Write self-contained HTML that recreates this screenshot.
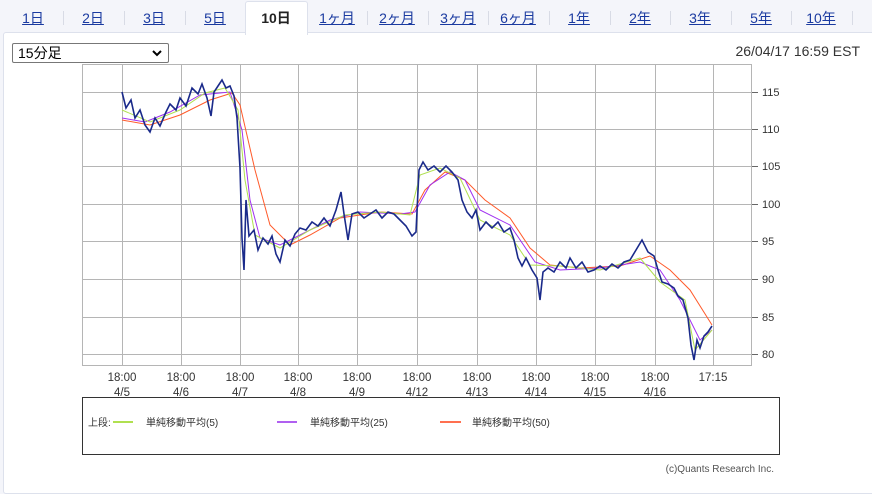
<!DOCTYPE html><html><head><meta charset="utf-8"><style>
body{margin:0;width:872px;height:484px;background:#f4f5fa;font-family:"Liberation Sans","Noto Sans CJK JP",sans-serif;overflow:hidden;position:relative}
.tab{position:absolute;top:8px;width:60px;text-align:center;font-size:14px;color:#1a3aa0;text-decoration:underline}
.sep{position:absolute;top:11px;width:1px;height:14px;background:#d8dbe5}
.panel{position:absolute;left:3px;top:32px;width:880px;height:460px;background:#fff;border:1px solid #dde1ec;border-radius:3px}
.act{position:absolute;left:245px;top:1px;width:61px;height:33px;background:#fff;border:1px solid #dde1ec;border-bottom:none;border-radius:3px 3px 0 0}
</style></head><body>
<div class="panel"></div>
<div class="act"></div>
<div class="tab" style="left:3px">1日</div><div class="tab" style="left:63px">2日</div><div class="tab" style="left:124px">3日</div><div class="tab" style="left:185px">5日</div>
<div class="tab" style="left:246px;text-decoration:none;font-weight:bold;color:#222">10日</div>
<div class="tab" style="left:307px">1ヶ月</div><div class="tab" style="left:367px">2ヶ月</div><div class="tab" style="left:428px">3ヶ月</div><div class="tab" style="left:488px">6ヶ月</div><div class="tab" style="left:549px">1年</div><div class="tab" style="left:610px">2年</div><div class="tab" style="left:670px">3年</div><div class="tab" style="left:731px">5年</div><div class="tab" style="left:791px">10年</div>
<div class="sep" style="left:63px"></div><div class="sep" style="left:124px"></div><div class="sep" style="left:185px"></div><div class="sep" style="left:367px"></div><div class="sep" style="left:428px"></div><div class="sep" style="left:488px"></div><div class="sep" style="left:549px"></div><div class="sep" style="left:610px"></div><div class="sep" style="left:670px"></div><div class="sep" style="left:731px"></div><div class="sep" style="left:791px"></div><div class="sep" style="left:852px"></div>
<div style="position:absolute;left:12px;top:43px;width:157px;height:20px;border:1px solid #777;border-radius:2px;background:#fff;font-size:14px;line-height:19px;padding-left:5px;box-sizing:border-box">15分足<svg width="10" height="7" style="position:absolute;right:6px;top:6px"><path d="M1 1L5 5L9 1" stroke="#000" stroke-width="2" fill="none"/></svg></div>
<div style="position:absolute;right:12px;top:43px;font-size:14px;color:#333">26/04/17 16:59 EST</div>
<svg width="872" height="484" style="position:absolute;left:0;top:0" font-family="Liberation Sans,DejaVu Sans,sans-serif">
<g stroke="#b5b5b5" stroke-width="1" fill="none">
<rect x="82.5" y="64.5" width="669" height="301"/>
<path d="M122.5 64V365M181.5 64V365M240.5 64V365M298.5 64V365M357.5 64V365M417.5 64V365M477.5 64V365M536.5 64V365M595.5 64V365M655.5 64V365M713.5 64V365"/>
<path d="M82 92.5H752M82 129.5H752M82 166.5H752M82 204.5H752M82 241.5H752M82 279.5H752M82 317.5H752M82 354.5H752"/>
<path d="M752 92.5H758M752 129.5H758M752 166.5H758M752 204.5H758M752 241.5H758M752 279.5H758M752 317.5H758M752 354.5H758" stroke="#666"/>
</g>
<g font-size="11" fill="#333"><text x="762" y="96">115</text><text x="762" y="133">110</text><text x="762" y="170">105</text><text x="762" y="208">100</text><text x="762" y="245">95</text><text x="762" y="283">90</text><text x="762" y="321">85</text><text x="762" y="358">80</text></g>
<g font-size="11.5" fill="#333" text-anchor="middle">
<text x="122" y="381">18:00</text><text x="122" y="396">4/5</text><text x="181" y="381">18:00</text><text x="181" y="396">4/6</text><text x="240" y="381">18:00</text><text x="240" y="396">4/7</text><text x="298" y="381">18:00</text><text x="298" y="396">4/8</text><text x="357" y="381">18:00</text><text x="357" y="396">4/9</text><text x="417" y="381">18:00</text><text x="417" y="396">4/12</text><text x="477" y="381">18:00</text><text x="477" y="396">4/13</text><text x="536" y="381">18:00</text><text x="536" y="396">4/14</text><text x="595" y="381">18:00</text><text x="595" y="396">4/15</text><text x="655" y="381">18:00</text><text x="655" y="396">4/16</text><text x="713" y="381">17:15</text></g>
<polyline fill="none" stroke="#ff5a2a" stroke-width="1" points="122,120 150,125 180,115 210,100 232,93 240,105 255,170 270,225 290,245 310,235 340,218 380,212 412,214 425,190 445,172 465,180 485,200 510,218 530,248 550,265 580,268 620,266 650,256 670,270 690,290 712,325"/>
<polyline fill="none" stroke="#a030f0" stroke-width="1" points="122,118 145,122 170,112 200,95 230,92 242,130 250,200 260,238 280,245 300,235 330,220 360,212 400,214 415,212 430,185 450,172 465,180 480,210 510,225 535,262 560,270 600,268 640,262 660,270 680,300 700,340 712,330"/>
<polyline fill="none" stroke="#b0e050" stroke-width="1" points="122,110 150,122 180,110 205,93 225,88 238,110 245,180 255,235 280,248 310,230 345,215 380,212 410,215 420,175 440,168 460,178 480,220 510,235 530,265 560,266 600,270 640,258 660,282 685,300 695,350 712,330"/>
<polyline fill="none" stroke="#1a2a8a" stroke-width="1.6" points="122,92 126,108 131,100 135,118 140,110 145,125 150,132 155,118 160,126 166,112 170,104 176,110 180,98 186,106 192,88 198,94 202,84 207,98 211,116 214,92 218,86 222,80 226,88 230,86 234,96 237,118 240,168 242,238 244,270 246,200 249,236 254,230 258,250 263,238 268,244 272,236 276,254 280,262 285,240 290,246 295,234 300,228 306,230 312,222 318,226 324,218 330,226 336,210 341,192 344,214 348,240 352,214 358,212 364,218 370,214 376,210 382,218 388,212 394,214 400,220 406,226 412,236 416,232 419,170 423,162 428,170 434,166 440,172 446,166 452,172 458,180 462,200 467,212 472,218 476,210 480,230 486,222 492,228 498,222 504,232 510,228 514,240 518,258 522,266 526,258 532,270 537,278 540,300 543,272 548,268 554,272 560,262 566,268 570,258 576,268 582,262 588,272 594,270 600,266 606,270 612,264 618,268 624,262 630,260 636,250 642,240 648,252 654,256 658,270 662,282 668,284 674,288 678,296 683,300 688,318 691,345 694,360 697,340 700,348 704,336 708,332 712,326"/>
<rect x="82.5" y="397.5" width="697" height="57" fill="none" stroke="#333"/>
<g font-size="10" fill="#333"><text x="88" y="426">上段:</text><text x="146" y="426">単純移動平均(5)</text><text x="310" y="426">単純移動平均(25)</text><text x="472" y="426">単純移動平均(50)</text>
<text x="774" y="472" text-anchor="end" fill="#555">(c)Quants Research Inc.</text></g>
<path d="M113 422H133" stroke="#b0e050" stroke-width="2"/><path d="M277 422H297" stroke="#b060f0" stroke-width="2"/><path d="M440 422H461" stroke="#ff7050" stroke-width="2"/>
</svg>
</body></html>
